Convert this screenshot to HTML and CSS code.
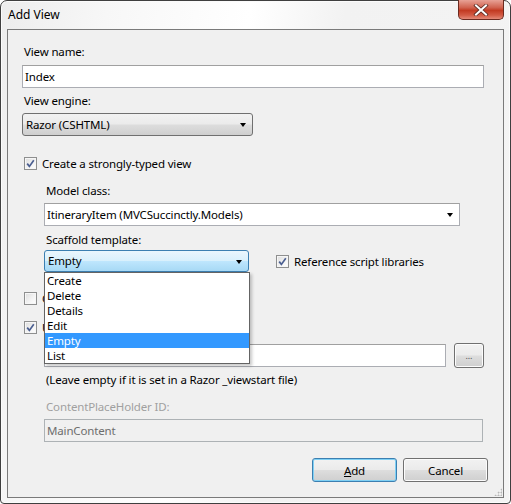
FILE: index.html
```html
<!DOCTYPE html>
<html lang="en">
<head>
  <meta charset="UTF-8" />
  <title>Add View</title>
  <link rel="stylesheet" href="styles.css">
</head>
<body>
  <div class="window">
    <div class="titlebar">
      <span class="title">Add View</span>
      <span class="close-btn">
        <svg width="16" height="12" viewBox="0 0 16 12">
          <path d="M3 1.5 L13 10.5 M13 1.5 L3 10.5" stroke="#5a2a22" stroke-width="3.6" stroke-linecap="square"/>
          <path d="M3 1.5 L13 10.5 M13 1.5 L3 10.5" stroke="#ffffff" stroke-width="2" stroke-linecap="square"/>
        </svg>
      </span>
    </div>

    <div class="client">
      <div class="label first">View name:</div>
      <div class="textbox name-box">Index</div>

      <div class="label">View engine:</div>
      <div class="combo engine">Razor (CSHTML)<span class="arrow"></span></div>

      <div class="check-row strongly">
        <span class="checkbox checked"></span>
        <span>Create a strongly-typed view</span>
      </div>

      <div class="indent">
        <div class="label model-label">Model class:</div>
        <div class="textbox model-box">ItineraryItem (MVCSuccinctly.Models)<span class="arrow"></span></div>

        <div class="label scaffold-label">Scaffold template:</div>
        <div class="scaffold-row">
          <div class="scaffold-wrap">
            <div class="combo focused">Empty<span class="arrow"></span></div>
            <ul class="droplist">
              <li>Create</li>
              <li>Delete</li>
              <li>Details</li>
              <li>Edit</li>
              <li class="selected">Empty</li>
              <li>List</li>
            </ul>
          </div>
          <div class="check-row">
            <span class="checkbox checked"></span>
            <span>Reference script libraries</span>
          </div>
        </div>
      </div>

      <div class="check-row partial">
        <span class="checkbox"></span>
        <span>Create as a partial view</span>
      </div>
      <div class="check-row layout">
        <span class="checkbox checked"></span>
        <span>Use a layout or master page:</span>
      </div>

      <div class="indent">
        <div class="layout-row">
          <div class="textbox layout-box"></div>
          <button class="btn browse">...</button>
        </div>
        <div class="label note">(Leave empty if it is set in a Razor _viewstart file)</div>
        <div class="label placeholder-label">ContentPlaceHolder ID:</div>
        <div class="textbox disabled">MainContent</div>
      </div>

      <div class="buttons">
        <button class="btn default"><u>A</u>dd</button>
        <button class="btn">Cancel</button>
      </div>

      <span class="grip"></span>
    </div>
  </div>
</body>
</html>
```

FILE: styles.css
```css
* {
  box-sizing: border-box;
}
body {
  margin: 0;
  width: 511px;
  height: 504px;
  background: #ffffff;
  font-family: 'Noto Sans', 'Open Sans', sans-serif;
  font-size: 11.5px;
  letter-spacing: -0.15px;
  color: #000000;
}
.window {
  width: 511px;
  height: 504px;
  border: 1px solid #3f3f3f;
  border-radius: 7px 7px 4px 4px;
  padding: 0 6px 5px 6px;
  background: linear-gradient(100deg, #ededed 0%, #f7f7f7 18%, #ffffff 42%, #f2f2f2 58%, #f4f4f4 100%);
  box-shadow: inset 0 0 0 1px #fbfbfb;
}
.titlebar {
  height: 28px;
  display: flex;
  justify-content: space-between;
  align-items: flex-start;
}
.title {
  padding-top: 6px;
  padding-left: 1px;
  line-height: 16px;
  font-size: 12px;
  letter-spacing: 0;
}
.close-btn {
  width: 46px;
  height: 20px;
  margin-top: -1px;
  border: 1px solid #6b2a20;
  border-top: none;
  border-radius: 0 0 5px 5px;
  background: linear-gradient(to bottom, #e8a296 0%, #d0624f 40%, #c23a22 55%, #d35a44 80%, #e48a78 100%);
  display: flex;
  align-items: center;
  justify-content: center;
}
.client {
  position: relative;
  height: 469px;
  background: #f0f0f0;
  border: 1px solid #7a7a7a;
  padding: 14px 15px 0 14px;
}
.label {
  line-height: 15px;
  padding-left: 2px;
  margin-top: 5px;
  white-space: nowrap;
}
.label.first {
  margin-top: 0;
}
.textbox {
  height: 23px;
  margin-top: 6px;
  border: 1px solid #abadb3;
  border-top-color: #a0a0a0;
  background: #ffffff;
  padding: 0 2px;
  line-height: 21px;
  position: relative;
  white-space: nowrap;
}
.name-box {
  width: 462px;
}
.combo {
  position: relative;
  width: 231px;
  height: 23px;
  margin-top: 5px;
  border: 1px solid #707070;
  border-radius: 3px;
  padding: 0 3px;
  line-height: 21px;
  background: linear-gradient(to bottom, #f2f2f2 0%, #ebebeb 48%, #dddddd 52%, #cfcfcf 100%);
}
.arrow {
  position: absolute;
  right: 6px;
  top: 9px;
  width: 0;
  height: 0;
  border-left: 3.5px solid transparent;
  border-right: 3.5px solid transparent;
  border-top: 4px solid #000000;
}
.check-row {
  display: flex;
  align-items: center;
  gap: 5px;
  line-height: 15px;
  padding-left: 2px;
  white-space: nowrap;
}
.checkbox {
  width: 13px;
  height: 13px;
  flex: none;
  border: 1px solid #8e8f8f;
  background: linear-gradient(135deg, #dcdcdc 0%, #f4f4f4 60%, #ffffff 100%);
  box-shadow: inset 0 0 0 1px #f6f6f6;
}
.checkbox.checked {
  background-image: url("data:image/svg+xml,%3Csvg xmlns='http://www.w3.org/2000/svg' width='11' height='11'%3E%3Cpath d='M2.2 5.6 L4.4 8.4 L8.8 2.2' fill='none' stroke='%234b5f91' stroke-width='1.7'/%3E%3C/svg%3E"), linear-gradient(135deg, #dcdcdc 0%, #f4f4f4 60%, #ffffff 100%);
  background-repeat: no-repeat;
  background-position: center;
}
.strongly {
  margin-top: 20px;
}
.indent {
  padding-left: 22px;
}
.model-label {
  margin-top: 12px;
}
.model-box {
  width: 416px;
  margin-top: 5px;
}
.scaffold-label {
  margin-top: 6px;
}
.scaffold-row {
  display: flex;
  align-items: center;
  gap: 25px;
  margin-top: 3px;
}
.scaffold-wrap {
  position: relative;
}
.combo.focused {
  width: 205px;
  height: 22px;
  margin-top: 0;
  border-color: #3c7fb1;
  line-height: 20px;
  background: linear-gradient(to bottom, #eaf6fd 0%, #d9f0fc 48%, #bee6fd 52%, #a7d9f5 100%);
}
.droplist {
  position: absolute;
  left: 0;
  top: 22px;
  width: 206px;
  margin: 0;
  padding: 0;
  list-style: none;
  background: #ffffff;
  border: 1px solid #646464;
  box-shadow: 2px 2px 3px rgba(0, 0, 0, 0.22);
  z-index: 2;
}
.droplist li {
  height: 15px;
  line-height: 15px;
  padding-left: 2px;
}
.droplist li.selected {
  background: #3399ff;
  color: #ffffff;
}
.partial {
  margin-top: 19px;
}
.layout {
  margin-top: 14px;
}
.layout-row {
  display: flex;
  align-items: center;
  gap: 8px;
  margin-top: 8px;
}
.layout-box {
  width: 402px;
  margin-top: 0;
}
.btn {
  font-family: inherit;
  font-size: 11.5px;
  letter-spacing: -0.15px;
  color: #000000;
  border: 1px solid #707070;
  border-radius: 3px;
  background: linear-gradient(to bottom, #f2f2f2 0%, #ebebeb 48%, #dddddd 52%, #cfcfcf 100%);
  box-shadow: inset 0 0 0 1px #fcfcfc;
  padding: 0;
}
.browse {
  width: 30px;
  height: 25px;
  font-size: 9px;
  color: #555555;
}
.note {
  margin-top: 4px;
}
.placeholder-label {
  margin-top: 12px;
  color: #a0a0a0;
}
.textbox.disabled {
  width: 439px;
  margin-top: 5px;
  background: #f0f0f0;
  border-color: #adb2b5;
  color: #6d6d6d;
}
.buttons {
  display: flex;
  justify-content: flex-end;
  gap: 6px;
  margin-top: 16px;
}
.buttons .btn {
  width: 85px;
  height: 24px;
}
.btn.default {
  border-color: #3c7fb1;
  box-shadow: inset 0 0 0 1px #7fd0f4;
}
.grip {
  position: absolute;
  right: 1px;
  bottom: 1px;
  width: 8px;
  height: 8px;
  background: radial-gradient(circle, #b8b8b8 0.8px, transparent 1.2px) 0 0 / 3px 3px;
  clip-path: polygon(100% 0, 100% 100%, 0 100%);
}
```
